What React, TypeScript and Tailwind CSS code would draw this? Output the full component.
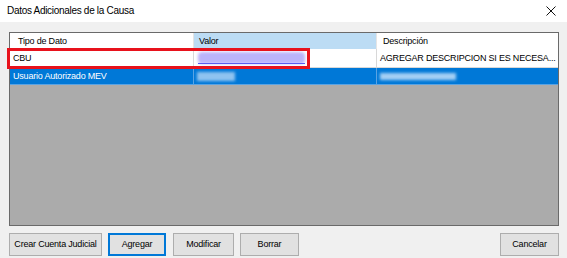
import React from "react";

const font = { fontFamily: '"Liberation Sans", Arial, sans-serif' };

function Btn({ label, w, focused }: { label: string; w: string; focused?: boolean }) {
  return (
    <div
      className={`${w} h-[23px] flex items-center justify-center bg-[#e1e1e1] text-[9px] tracking-[-0.2px] whitespace-nowrap text-black ${
        focused ? "border-2 border-[#0078d7]" : "border border-[#adadad]"
      }`}
    >
      {label}
    </div>
  );
}

export default function App() {
  return (
    <div className="w-[567px] h-[258px] bg-[#f0f0f0] flex flex-col overflow-hidden text-black" style={font}>
      <div className="h-[22px] bg-white flex items-center justify-between pl-[7px] pr-[11px] shrink-0">
        <span className="text-[10px] tracking-[-0.3px] leading-none">Datos Adicionales de la Causa</span>
        <svg width="10" height="10" viewBox="0 0 10 10">
          <path d="M0.5 0.5 L9.5 9.5 M9.5 0.5 L0.5 9.5" stroke="#111" strokeWidth="1" fill="none" />
        </svg>
      </div>

      <div className="mt-[10px] ml-[9px] w-[550px] h-[194px] border border-[#6a6a6a] bg-[#ababab] relative flex flex-col shrink-0">
        {/* header */}
        <div className="h-[16px] flex bg-white text-[9px] tracking-[-0.2px] leading-none shrink-0">
          <div className="w-[184px] border-r border-[#e5e5e5] flex items-center pl-[8px]">Tipo de Dato</div>
          <div className="w-[183px] bg-[#bcdcf4] border-r border-[#e5e5e5] flex items-center pl-[5px]">Valor</div>
          <div className="flex-1 flex items-center pl-[6px]">Descripción</div>
        </div>
        {/* row CBU */}
        <div className="h-[19px] flex bg-white text-[9px] tracking-[-0.2px] leading-none border-b border-[#d8d8d8] shrink-0">
          <div className="w-[184px] border-r border-[#d8d8d8] flex items-center pl-[3px]">CBU</div>
          <div className="w-[183px] border-r border-[#d8d8d8] flex items-center pl-[4px] relative">
            <div className="w-[107px] h-[12px] bg-[#bbb4fb] blur-[1.5px] rounded-sm" />
            <div className="absolute left-[4px] top-[14px] w-[107px] h-[1px] bg-[#5a5cf2]" />
          </div>
          <div className="flex-1 flex items-center pl-[3px] whitespace-nowrap overflow-hidden">
            AGREGAR DESCRIPCION SI ES NECESA...
          </div>
        </div>
        {/* row selected */}
        <div className="h-[17px] flex bg-[#0078d7] text-white text-[9px] tracking-[-0.2px] leading-none border-b border-[#5aa3e3] shrink-0">
          <div className="w-[184px] border-r border-[#5aa3e3] flex items-center pl-[3px]">Usuario Autorizado MEV</div>
          <div className="w-[183px] border-r border-[#5aa3e3] flex items-center pl-[3px]">
            <div className="w-[38px] h-[9px] bg-[#8fc3f0] blur-[1.5px]" />
          </div>
          <div className="flex-1 flex items-center pl-[3px]">
            <div className="w-[76px] h-[7px] bg-[#a3cff4] blur-[1.5px]" />
          </div>
        </div>

        {/* red annotation */}
        <div className="absolute left-[-3px] top-[15px] w-[303px] h-[21px] border-[3px] border-[#e8121c] pointer-events-none" />
      </div>

      <div className="mt-[7px] ml-[9px] w-[550px] flex shrink-0">
        <Btn label="Crear Cuenta Judicial" w="w-[93px]" />
        <div className="w-[6px]" />
        <Btn label="Agregar" w="w-[58px]" focused />
        <div className="w-[7px]" />
        <Btn label="Modificar" w="w-[61px]" />
        <div className="w-[6px]" />
        <Btn label="Borrar" w="w-[59px]" />
        <div className="flex-1" />
        <Btn label="Cancelar" w="w-[59px]" />
      </div>
    </div>
  );
}
